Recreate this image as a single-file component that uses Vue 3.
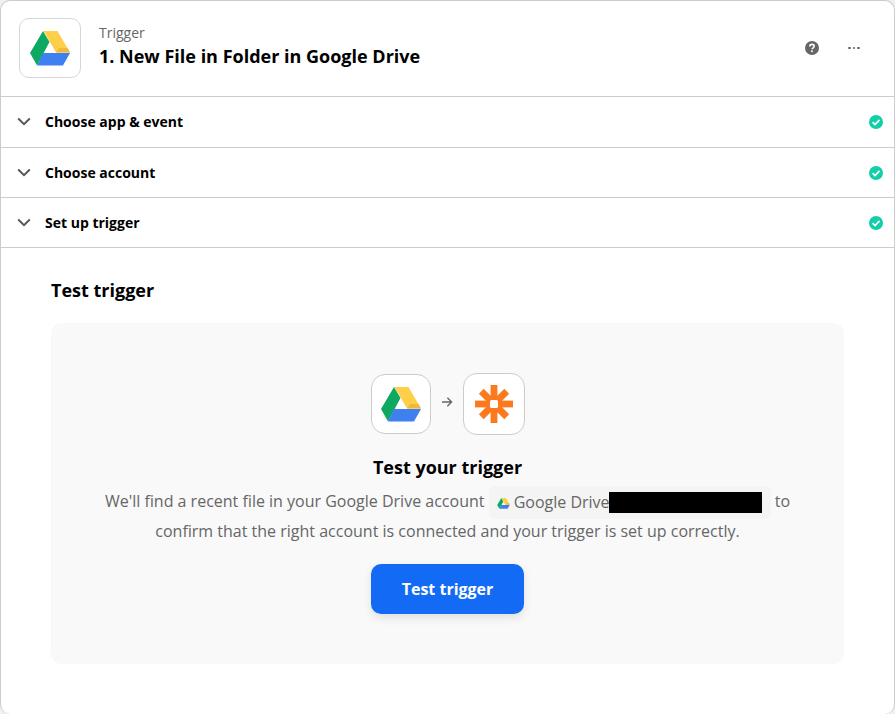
<template>
  <div class="card">
    <svg class="defs" width="0" height="0">
      <symbol id="drive" viewBox="0 0 40 35">
        <polygon points="13,0 19.5,11 7,34.5 0,22" fill="#0da960" />
        <polygon points="13.5,0 27.5,0 40,21.5 26,21.5" fill="#ffcf4a" />
        <polygon points="26,21.5 40,21.5 37.5,17 29,17" fill="#f2b83c" />
        <polygon points="13,22 40,22 33,34.5 7,34.5" fill="#3f80f0" />
      </symbol>
    </svg>

    <header class="head">
      <div class="app-box head-logo">
        <svg class="drive-lg"><use href="#drive" /></svg>
      </div>
      <div class="head-text">
        <div class="head-label">Trigger</div>
        <div class="head-title">1. New File in Folder in Google Drive</div>
      </div>
      <div class="head-actions">
        <svg class="help" viewBox="0 0 14 14">
          <circle cx="7" cy="7" r="7" fill="#666" />
          <path d="M4.8 5.4c0-1.3 1-2 2.2-2s2.2.7 2.2 1.9c0 1.5-2.1 1.5-2.1 3" fill="none" stroke="#fff" stroke-width="1.6" />
          <rect x="6.1" y="9.4" width="1.7" height="1.7" fill="#fff" />
        </svg>
        <div class="dots"><i></i><i></i><i></i></div>
      </div>
    </header>

    <div v-for="(row, i) in rows" :key="row" :class="['row', { first: i === 0 }]">
      <svg class="chev" viewBox="0 0 14 9">
        <path d="M1.2 1.5 7 7.2l5.8-5.7" fill="none" stroke="#555" stroke-width="1.9" />
      </svg>
      <span class="row-label">{{ row }}</span>
      <svg class="ok" viewBox="0 0 14 14">
        <circle cx="7" cy="7" r="7" fill="#13cfa8" />
        <path d="M3.6 7.2l2.4 2.3 4.5-4.6" fill="none" stroke="#fff" stroke-width="1.7" />
      </svg>
    </div>

    <section class="body">
      <h2 class="section-title">Test trigger</h2>
      <div class="panel">
        <div class="apps">
          <div class="app-box small">
            <svg class="drive-md"><use href="#drive" /></svg>
          </div>
          <svg class="arrow" viewBox="0 0 12 12">
            <path d="M1 6h9.4M6.4 1.8 10.6 6l-4.2 4.2" fill="none" stroke="#666" stroke-width="1.4" />
          </svg>
          <div class="app-box zap-box">
            <svg class="zap" viewBox="0 0 38 38">
              <g fill="#fb7a1e">
                <rect x="15.6" y="0" width="6.8" height="38" />
                <rect x="0" y="15.6" width="38" height="6.8" />
                <rect x="15.6" y="1" width="6.8" height="36" transform="rotate(45 19 19)" />
                <rect x="15.6" y="1" width="6.8" height="36" transform="rotate(-45 19 19)" />
              </g>
              <rect x="15" y="15" width="8" height="8" rx="1.5" fill="#fff" />
            </svg>
          </div>
        </div>
        <h3 class="panel-title">Test your trigger</h3>
        <p class="panel-text">
          We'll find a recent file in your Google Drive account
          <span class="pill">
            <svg class="drive-sm"><use href="#drive" /></svg>
            <span>Google Drive</span>
            <span class="redact"></span>
          </span>
          to<br />confirm that the right account is connected and your trigger is set up correctly.
        </p>
        <button class="test-btn">Test trigger</button>
      </div>
    </section>
  </div>
</template>

<script setup>
const rows = ['Choose app & event', 'Choose account', 'Set up trigger']
</script>

<style>
html, body { margin: 0; background: #f0f0f0; }
</style>

<style scoped>
.card {
  box-sizing: border-box;
  width: 895px; height: 714px;
  border: 1px solid #ccc; border-bottom: none;
  border-radius: 10px;
  background: #fff;
  font-family: "Open Sans", "Noto Sans", sans-serif;
  color: #000;
  overflow: hidden;
}
.defs { position: absolute; }
.head {
  box-sizing: border-box;
  height: 96px;
  display: flex; align-items: center;
  padding: 0 34px 0 18px;
  border-bottom: 1px solid #ccc;
}
.app-box {
  box-sizing: border-box;
  display: flex; align-items: center; justify-content: center;
  background: #fff;
  border: 1px solid #d6d6d6;
  border-radius: 10px;
}
.head-logo { width: 62px; height: 60px; margin-top: -1px; }
.drive-lg { width: 40px; height: 35px; }
.head-text { margin-left: 18px; flex: 1; margin-top: -6px; }
.head-label { font-size: 14px; line-height: 20px; color: #666; }
.head-title { font-size: 18px; line-height: 25px; font-weight: 700; margin-top: 1px; }
.head-actions { display: flex; align-items: center; gap: 29px; margin-top: -1px; }
.help { width: 14px; height: 14px; }
.dots { display: flex; gap: 2px; width: 12px; }
.dots i { width: 2.5px; height: 2.5px; background: #666; border-radius: 50%; }
.row {
  box-sizing: border-box;
  height: 50px;
  display: flex; align-items: center;
  padding: 0 11px 0 16px;
  border-bottom: 1px solid #ccc;
}
.row.first { height: 51px; padding-bottom: 1px; }
.chev { width: 14px; height: 9px; }
.row-label { flex: 1; margin-left: 14px; font-size: 14px; font-weight: 700; }
.ok { width: 14px; height: 14px; }
.body { padding: 30px 50px 0; }
.section-title { margin: 0; font-size: 18px; line-height: 24px; font-weight: 700; }
.panel {
  box-sizing: border-box;
  height: 341px;
  margin-top: 21px; padding-top: 50px;
  background: #f9f9f9;
  border-radius: 10px;
  display: flex; flex-direction: column; align-items: center;
}
.apps { display: flex; align-items: center; gap: 10px; }
.small { width: 60px; height: 60px; border-radius: 14px; border-color: #ccc; }
.zap-box { width: 62px; height: 62px; border-radius: 14px; border-color: #ccc; }
.drive-md { width: 40px; height: 35px; }
.zap { width: 38px; height: 38px; }
.arrow { width: 12px; height: 12px; margin-top: -4px; }
.panel-title { margin: 19px 0 0; font-size: 18px; line-height: 26px; font-weight: 700; }
.panel-text {
  margin: 7px 0 0;
  font-size: 16px; line-height: 29px;
  text-align: center; color: #666;
}
.pill {
  display: inline-flex; align-items: center;
  vertical-align: middle;
  box-sizing: border-box;
  height: 33px; width: 282px;
  margin: -2px 0;
  padding-left: 8px;
  background: #f4f4f4;
  border-radius: 6px;
}
.drive-sm { width: 13px; height: 11px; margin-right: 4px; margin-top: 1px; }
.redact { width: 153px; height: 21px; margin-left: -1px; background: #000; flex: none; }
.test-btn {
  width: 153px; height: 50px;
  margin-top: 18px;
  border: none; border-radius: 10px;
  background: #136bf5; color: #fff;
  font-family: inherit; font-size: 16px; font-weight: 700;
  box-shadow: 0 4px 10px rgba(0,0,0,0.1);
  cursor: pointer;
}
</style>
